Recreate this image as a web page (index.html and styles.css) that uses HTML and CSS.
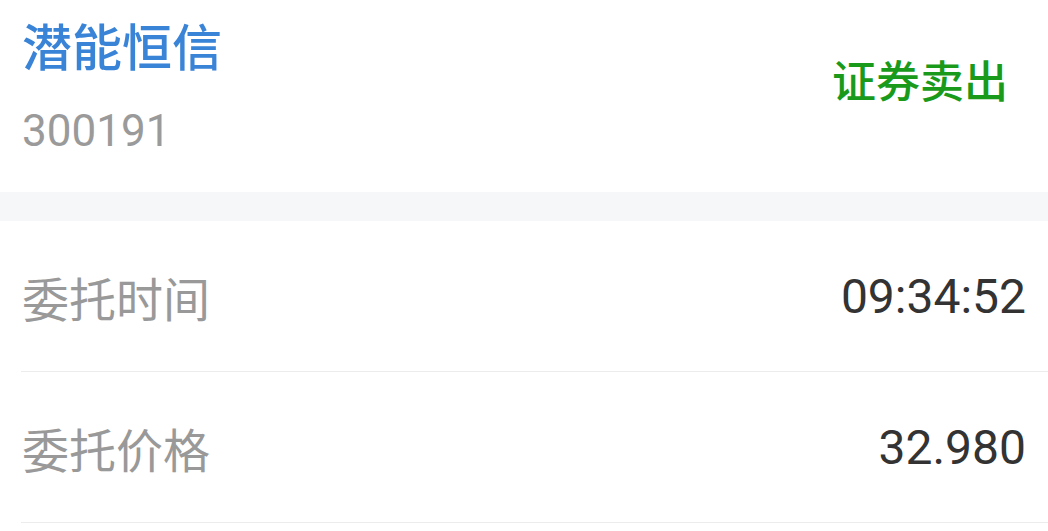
FILE: index.html
```html
<!DOCTYPE html>
<html lang="zh-CN">
<head>
<meta charset="utf-8">
<link rel="stylesheet" href="styles.css">
</head>
<body>
<div class="page">
  <header class="head">
    <div class="stock">
      <div class="name">潜能恒信</div>
      <div class="code">300191</div>
    </div>
    <div class="type">证券卖出</div>
  </header>
  <div class="gap"></div>
  <div class="rows">
    <div class="row">
      <span class="label">委托时间</span>
      <span class="value">09:34:52</span>
    </div>
    <div class="row">
      <span class="label">委托价格</span>
      <span class="value">32.980</span>
    </div>
  </div>
</div>
</body>
</html>
```
FILE: styles.css
```css
html, body {
  margin: 0;
  padding: 0;
  background: #ffffff;
}
body {
  font-family: Roboto, "Noto Sans CJK SC", sans-serif;
  width: 1048px;
  height: 531px;
  overflow: hidden;
}
.head {
  height: 192px;
  display: flex;
  align-items: center;
  justify-content: space-between;
  padding: 0 40px 0 22px;
  box-sizing: border-box;
}
.stock {
  display: flex;
  flex-direction: column;
  align-self: flex-start;
  margin-top: 9px;
}
.name {
  font-family: "Noto Sans CJK SC", sans-serif;
  font-size: 50px;
  line-height: 70px;
  font-weight: 500;
  color: #3a84d8;
}
.code {
  font-size: 44px;
  line-height: 60px;
  margin-top: 22px;
  color: #9a9a9a;
}
.type {
  font-family: "Noto Sans CJK SC", sans-serif;
  font-size: 44px;
  font-weight: 500;
  color: #1a9a1a;
  margin-top: -34px;
}
.gap {
  height: 29px;
  background: #f6f7f9;
}
.rows {
  padding-left: 21px;
}
.row {
  height: 150px;
  border-bottom: 1px solid #ececec;
  display: flex;
  align-items: center;
  justify-content: space-between;
  padding-right: 22px;
}
.label {
  font-family: "Noto Sans CJK SC", sans-serif;
  font-size: 47px;
  color: #999999;
  padding-left: 1px;
}
.value {
  font-size: 48px;
  color: #333333;
}
```
